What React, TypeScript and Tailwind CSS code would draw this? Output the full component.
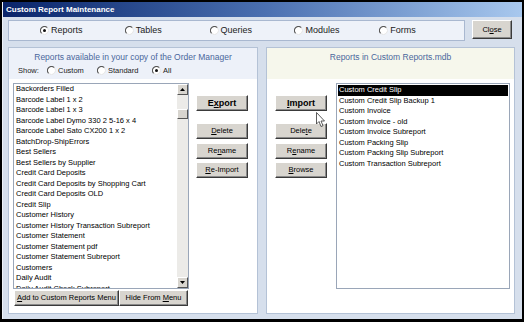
import React from "react";

const leftItems = [
  "Backorders Filled",
  "Barcode Label 1 x 2",
  "Barcode Label 1 x 3",
  "Barcode Label Dymo 330 2 5-16 x 4",
  "Barcode Label Sato CX200 1 x 2",
  "BatchDrop-ShipErrors",
  "Best Sellers",
  "Best Sellers by Supplier",
  "Credit Card Deposits",
  "Credit Card Deposits by Shopping Cart",
  "Credit Card Deposits OLD",
  "Credit Slip",
  "Customer History",
  "Customer History Transaction Subreport",
  "Customer Statement",
  "Customer Statement pdf",
  "Customer Statement Subreport",
  "Customers",
  "Daily Audit",
  "Daily Audit Check Subreport",
];

const rightItems = [
  "Custom Credit Slip",
  "Custom Credit Slip Backup 1",
  "Custom Invoice",
  "Custom Invoice - old",
  "Custom Invoice Subreport",
  "Custom Packing Slip",
  "Custom Packing Slip Subreport",
  "Custom Transaction Subreport",
];

const Radio = ({ checked = false }: { checked?: boolean }) => (
  <svg width="9" height="9" viewBox="0 0 9 9" className="shrink-0">
    <circle cx="4.5" cy="4.5" r="4" fill="#fff" />
    <path d="M1.67 7.33 A4 4 0 0 1 7.33 1.67" fill="none" stroke="#555" strokeWidth="1.2" />
    <path d="M7.33 1.67 A4 4 0 0 1 1.67 7.33" fill="none" stroke="#e4e4e4" strokeWidth="1" />
    {checked && <circle cx="4.5" cy="4.5" r="1.5" fill="#111" />}
  </svg>
);

const WinButton = ({
  children,
  className = "",
}: {
  children: React.ReactNode;
  className?: string;
}) => (
  <button className={`flex items-center justify-center whitespace-pre bg-[#d8d5cf] border border-t-white border-l-white border-b-[#3a3a3a] border-r-[#3a3a3a] shadow-[inset_-1px_-1px_0_#8a8a8a] text-[7.5px] text-black leading-none ${className}`}>
    {children}
  </button>
);

const ButtonColumn = ({ items }: { items: React.ReactNode[] }) => (
  <div className="flex flex-col w-[52px] pt-[12px] shrink-0">
    <WinButton className="h-[16px] text-[9px] font-bold">{items[0]}</WinButton>
    <WinButton className="h-[16px] mt-[12px]">{items[1]}</WinButton>
    <WinButton className="h-[16px] mt-[4px]">{items[2]}</WinButton>
    <WinButton className="h-[16px] mt-[3px]">{items[3]}</WinButton>
  </div>
);

const Arrow = ({ up }: { up?: boolean }) => (
  <div className="h-[11px] flex items-center justify-center bg-[#d8d5cf] border border-t-white border-l-white border-b-[#555] border-r-[#555]">
    <svg width="5" height="3" viewBox="0 0 5 3">
      <path d={up ? "M0 3 L2.5 0 L5 3 Z" : "M0 0 L2.5 3 L5 0 Z"} fill="#000" />
    </svg>
  </div>
);

export default function App() {
  return (
    <div
      className="relative w-[524px] h-[322px] bg-black pt-[2px] px-[2px] pb-[3px] text-black"
      style={{ fontFamily: "'Liberation Sans', Arial, sans-serif" }}
    >
      <div className="h-full flex flex-col bg-[#d6dfec] border-l border-[#eef2f8]">
        {/* Title bar */}
        <div className="h-[15px] flex items-center pl-[3px] bg-gradient-to-r from-[#0a246a] via-[#4a6fb0] to-[#a8c8ee]">
          <span className="text-white font-bold text-[8px] leading-none">Custom Report Maintenance</span>
        </div>

        {/* Top radio row */}
        <div className="flex items-start mt-[3px] pl-[5px]">
          <div className="w-[457px] h-[21px] bg-[#eef2f9] border border-[#a9b8d0] flex items-center pl-[31px]">
            {["Reports", "Tables", "Queries", "Modules", "Forms"].map((l, i) => (
              <div key={l} className="w-[90px] flex items-center gap-[2px]">
                <Radio checked={i === 0} />
                <span className="text-[9px] leading-none text-[#222]">{l}</span>
              </div>
            ))}
          </div>
          <WinButton className="ml-[7px] w-[40px] h-[19px]">
            Cl<u>o</u>se
          </WinButton>
        </div>

        {/* Panels */}
        <div className="flex mt-[6px] pl-[5px] gap-[8px]">
          {/* Left panel */}
          <div className="w-[250px] h-[267px] border border-[#b4c2d6] bg-white flex flex-col">
            <div className="h-[31px] bg-[#edf1f9] flex flex-col">
              <div className="pt-[4px] text-center text-[8.5px] leading-[11px] text-[#4a679c]">
                Reports available in your copy of the Order Manager
              </div>
              <div className="flex items-center mt-[2px] h-[11px] pl-[9px] text-[7.5px] text-[#222]">
                <span className="w-[29px]">Show:</span>
                <div className="w-[50px] flex items-center gap-[2px]">
                  <Radio />
                  <span>Custom</span>
                </div>
                <div className="w-[55px] flex items-center gap-[2px]">
                  <Radio />
                  <span>Standard</span>
                </div>
                <div className="flex items-center gap-[2px]">
                  <Radio checked />
                  <span>All</span>
                </div>
              </div>
            </div>
            <div className="flex pt-[4px] pl-[4px]">
              <div className="flex flex-col w-[176px]">
                <div className="h-[206px] border border-[#9aa6b8] flex">
                  <div className="flex-1 overflow-hidden pl-[2px]">
                    {leftItems.map((t) => (
                      <div key={t} className="h-[10.5px] text-[7.5px] leading-[10.5px] whitespace-nowrap">
                        {t}
                      </div>
                    ))}
                  </div>
                  <div className="w-[11px] flex flex-col bg-[#ecebe8]">
                    <Arrow up />
                    <div className="flex-1 flex flex-col">
                      <div className="mt-[14px] h-[10px] bg-[#d8d5cf] border border-t-white border-l-white border-b-[#555] border-r-[#555]" />
                    </div>
                    <Arrow />
                  </div>
                </div>
                <div className="flex mt-[1px] pl-[1px]">
                  <WinButton className="w-[105px] h-[16px]">
                    <u>A</u>{"dd to Custom Reports Menu"}
                  </WinButton>
                  <WinButton className="w-[69px] h-[16px]">
                    {"Hide From "}<u>M</u>{"enu"}
                  </WinButton>
                </div>
              </div>
              <div className="ml-[7px]">
                <ButtonColumn
                  items={[
                    <>E<u>x</u>port</>,
                    <><u>D</u>elete</>,
                    <>Re<u>n</u>ame</>,
                    <><u>R</u>e-Import</>,
                  ]}
                />
              </div>
            </div>
          </div>

          {/* Right panel */}
          <div className="w-[249px] h-[267px] border border-[#b4c2d6] bg-white flex flex-col">
            <div className="h-[31px] bg-[#f6f7ec] pt-[4px] text-center text-[8.5px] leading-[11px] text-[#4a679c]">
              Reports in Custom Reports.mdb
            </div>
            <div className="flex pt-[4px] pl-[8px]">
              <ButtonColumn
                items={[
                  <><u>I</u>mport</>,
                  <>Dele<u>t</u>e</>,
                  <>R<u>e</u>name</>,
                  <><u>B</u>rowse</>,
                ]}
              />
              <div className="ml-[9px] w-[174px] h-[206px] border border-[#9aa6b8] pt-[1px] px-[1px]">
                {rightItems.map((t, i) => (
                  <div
                    key={t}
                    className={`h-[10.5px] pl-[1px] text-[7.5px] leading-[10.5px] whitespace-nowrap ${
                      i === 0 ? "bg-black text-white" : ""
                    }`}
                  >
                    {t}
                  </div>
                ))}
              </div>
            </div>
          </div>
        </div>
      </div>

      {/* Mouse cursor */}
      <svg className="absolute left-[316px] top-[112px]" width="10" height="16" viewBox="0 0 10 16">
        <path d="M0.5 0.5 L0.5 12 L3 9.5 L5 14.5 L7 13.7 L5 9 L8.5 9 Z" fill="#fff" stroke="#333" strokeWidth="0.8" />
      </svg>
    </div>
  );
}
